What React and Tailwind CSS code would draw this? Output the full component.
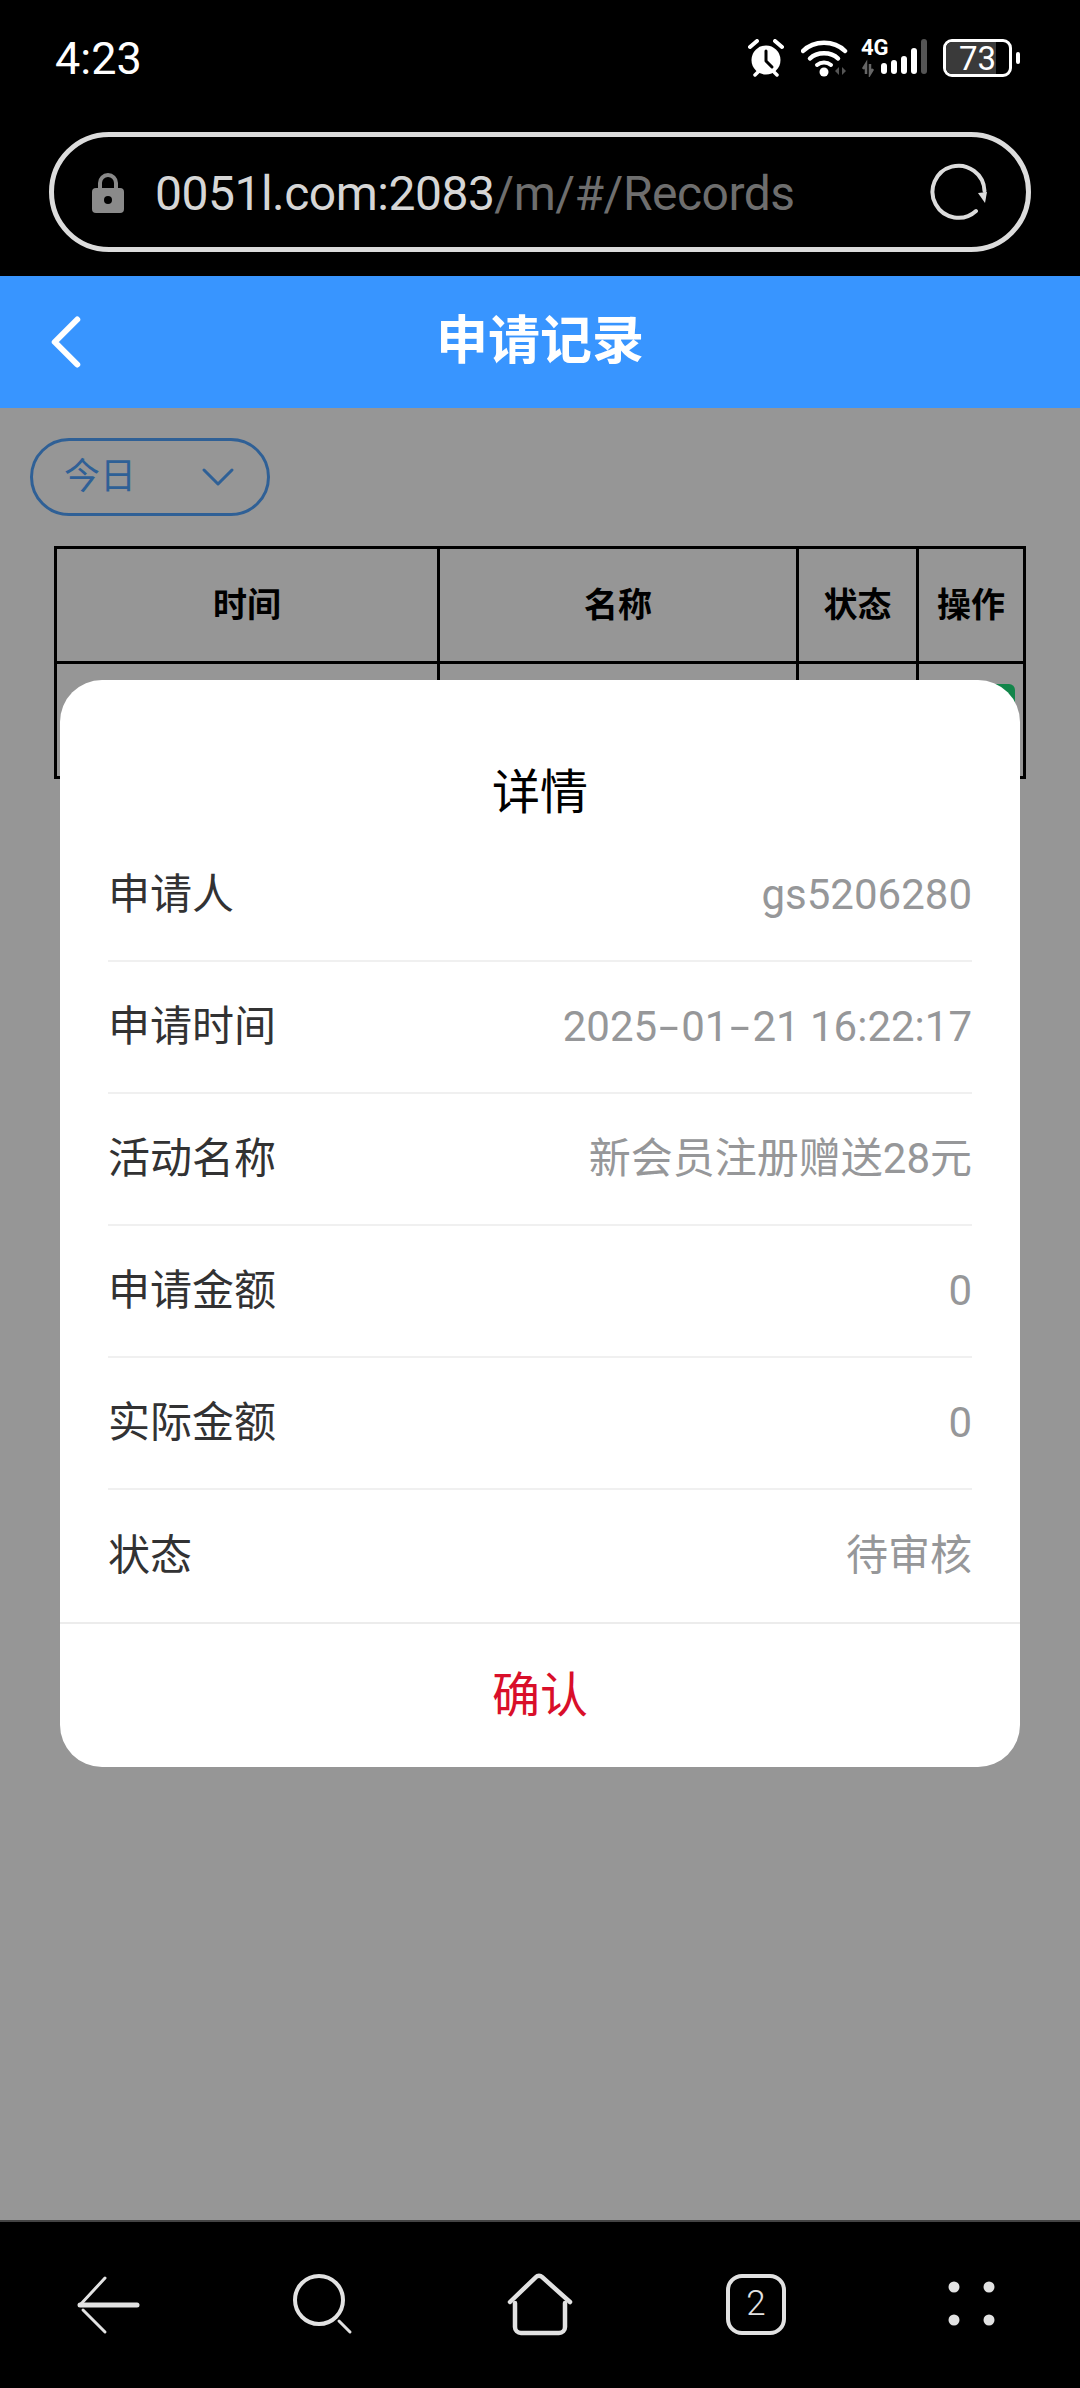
import { ChevronDown, ChevronLeft } from 'lucide-react'

const cjk = "font-['Roboto','Noto_Sans_CJK_SC',sans-serif]"

// the reference font draws hyphens about twice as wide as Roboto does
const WideHyphen = () => <span className="inline-block w-[24px] text-center scale-x-[1.7]">-</span>

const details = [
  { label: '申请人', value: 'gs5206280' },
  { label: '申请时间', value: <>2025<WideHyphen />01<WideHyphen />21 16:22:17</> },
  { label: '活动名称', value: '新会员注册赠送28元' },
  { label: '申请金额', value: '0' },
  { label: '实际金额', value: '0' },
  { label: '状态', value: '待审核' }
]

function StatusIcons() {
  return (
    <div className="flex items-center">
      <svg width="36" height="38" viewBox="0 0 36 38" fill="none" className="mr-[17px]">
        <circle cx="18" cy="21" r="14.5" fill="#fff" />
        <path d="M18 12v10l6 6" stroke="#000" strokeWidth="3" strokeLinecap="round" strokeLinejoin="round" />
        <path d="M2 8l7-6M34 8l-7-6" stroke="#fff" strokeWidth="4" strokeLinecap="round" />
        <path d="M7 36l4-4M29 36l-4-4" stroke="#fff" strokeWidth="3.5" strokeLinecap="round" />
      </svg>
      <svg width="48" height="38" viewBox="0 0 48 38" fill="none" className="mr-[12px]">
        <path d="M2 12C13 1 33 1 44 12" stroke="#fff" strokeWidth="4.5" strokeLinecap="round" />
        <path d="M9 19.5c7-7 21-7 28 0" stroke="#fff" strokeWidth="4.5" strokeLinecap="round" />
        <path d="M16 26c4-3.500 10-3.500 14 0" stroke="#fff" strokeWidth="4" strokeLinecap="round" />
        <circle cx="23" cy="33" r="4.500" fill="#fff" />
        <path d="M38 28v8l-4-4zM41 28v8l4-4z" fill="#555" />
      </svg>
      <div className="relative w-[68px] h-[38px] mr-[14px]">
        <span className="absolute left-0 top-[-2px] font-['Roboto',sans-serif] font-bold text-[22px] leading-[22px] text-white">4G</span>
        <svg width="68" height="38" viewBox="0 0 68 38" fill="#fff" className="absolute left-0 top-0">
          <path d="M2 30l3-5v10M12 30l-3 5V25" stroke="#666" strokeWidth="2.500" fill="none" />
          <rect x="20" y="24" width="6" height="11" rx="3" />
          <rect x="30" y="21" width="6" height="14" rx="3" />
          <rect x="40" y="17" width="6" height="18" rx="3" />
          <rect x="50" y="9" width="6" height="26" rx="3" />
          <rect x="60" y="0" width="6" height="35" rx="3" fill="#555" />
        </svg>
      </div>
      <div className="relative w-[69px] h-[38px] rounded-[9px] border-[3px] border-white overflow-hidden">
        <div className="w-[50px] h-full bg-[#3a3a3a]"></div>
        <span className="absolute inset-0 flex items-center justify-center font-['Roboto',sans-serif] text-[33px] leading-none text-white">73</span>
      </div>
      <div className="w-[4px] h-[12px] ml-[4px] rounded-full bg-white"></div>
    </div>
  )
}

function AddressBar() {
  return (
    <div className="h-[120px] mx-[49px] flex items-center rounded-full border-[5px] border-[#dcdcdc] pl-[38px] pr-[37px]">
      <svg width="32" height="40" viewBox="0 0 32 40" fill="none" className="mr-[31px] mt-[1px]">
        <path d="M8 18V10a8 8 0 0 1 16 0v8" stroke="#8a8a8a" strokeWidth="4" />
        <rect x="0" y="15" width="32" height="25" rx="4" fill="#8a8a8a" />
        <circle cx="16" cy="27" r="4" fill="#000" />
      </svg>
      <div className="flex-1 mt-[3px] text-[48px] leading-none font-['Roboto',sans-serif] tracking-[-0.5px] text-[#d6d6d6]">
        0051l.com:2083<span className="text-[#6e6e6e]">/m/#/Records</span>
      </div>
      <svg width="60" height="60" viewBox="0 0 60 60" fill="none">
        <path d="M47 49A26 26 0 1 1 55.500 29" stroke="#dcdcdc" strokeWidth="4" strokeLinecap="round" />
        <path d="M49 31L58 30L56 41Z" fill="#dcdcdc" />
      </svg>
    </div>
  )
}

function DetailModal() {
  return (
    <div className={`absolute left-[60px] top-[680px] w-[960px] h-[1087px] flex flex-col rounded-[42px] bg-white ${cjk}`}>
      <div className="pt-[86px] text-center text-[48px] leading-[54px] text-black">详情</div>
      <div className="mt-[10px] mx-[48px] flex-1">
        {details.map((row, i) => (
          <div
            key={row.label}
            className={`h-[132px] pb-[2px] flex items-center justify-between text-[42px] ${i < details.length - 1 ? 'border-b-2 border-[#f0f0f0]' : ''}`}
          >
            <span className="text-[#323233]">{row.label}</span>
            <span className="text-[#969799]">{row.value}</span>
          </div>
        ))}
      </div>
      <div className="h-[145px] flex items-center justify-center border-t-2 border-[#ececec] text-[48px] text-[#d90f2a]">
        确认
      </div>
    </div>
  )
}

export default function App() {
  return (
    <div className={`relative w-[1080px] h-[2388px] flex flex-col overflow-hidden bg-black ${cjk}`}>
      <div className="h-[116px] flex items-center justify-between pl-[55px] pr-[60px]">
        <span className="text-[45px] leading-none font-['Roboto',sans-serif] text-white">4:23</span>
        <StatusIcons />
      </div>
      <div className="h-[160px] pt-[16px]">
        <AddressBar />
      </div>

      <div className="relative h-[132px] flex items-center justify-center bg-[#3895ff]">
        <ChevronLeft className="absolute left-[21px] top-[21px] text-white" size={90} strokeWidth={1.6} />
        <span className="text-[52px] font-bold text-white">申请记录</span>
      </div>

      <div className="flex-1 bg-[#969696] pt-[30px]">
        <div className="ml-[30px] w-[240px] h-[78px] flex items-center justify-between rounded-full border-[3px] border-[#2f6096] pl-[31px] pr-[21px] text-[#2f6096]">
          <span className="text-[36px]">今日</span>
          <ChevronDown size={56} strokeWidth={1.3} />
        </div>
        <table className="mt-[30px] ml-[54px] w-[969px] table-fixed border-collapse border-[3px] border-black text-black">
          <colgroup>
            <col className="w-[383px]" />
            <col className="w-[359px]" />
            <col className="w-[120px]" />
            <col className="w-[107px]" />
          </colgroup>
          <thead>
            <tr className="h-[115px]">
              {['时间', '名称', '状态', '操作'].map((h) => (
                <th key={h} className="border-[3px] border-black text-[34px] font-bold">{h}</th>
              ))}
            </tr>
          </thead>
          <tbody>
            <tr className="h-[115px]">
              <td className="border-[3px] border-black"></td>
              <td className="border-[3px] border-black"></td>
              <td className="border-[3px] border-black"></td>
              <td className="border-[3px] border-black align-top pt-[20px] pl-[6px]">
                <div className="h-[70px] w-[90px] rounded-[6px] bg-[#12854a]"></div>
              </td>
            </tr>
          </tbody>
        </table>
      </div>

      <div className="h-[168px] border-t-2 border-[#444] flex items-center relative">
        <svg width="1080" height="168" viewBox="0 0 1080 168" fill="none" stroke="#e2e2e2" strokeLinecap="round">
          <path d="M105 57L80 84" strokeWidth="3" />
          <path d="M83 89L105 111" strokeWidth="3" />
          <path d="M80 84H137" strokeWidth="5" />
          <circle cx="319" cy="79" r="24" strokeWidth="4" />
          <path d="M339 100l11 11" strokeWidth="3" />
          <path d="M510 81L536 56a4 4 0 0 1 6 0L570 81" strokeWidth="4.500" />
          <path d="M515 82v24a6 6 0 0 0 6 6h38a6 6 0 0 0 6-6V82" strokeWidth="4.500" />
          <rect x="728" y="55" width="56" height="57" rx="14" strokeWidth="4" />
          <g fill="#e2e2e2" stroke="none">
            <circle cx="954" cy="66" r="5.500" />
            <circle cx="989" cy="66" r="5.500" />
            <circle cx="954" cy="99" r="5.500" />
            <circle cx="989" cy="99" r="5.500" />
          </g>
        </svg>
        <span className="absolute left-[728px] top-[54px] w-[56px] h-[57px] flex items-center justify-center font-['Roboto',sans-serif] font-light text-[35px] text-[#e2e2e2]">2</span>
      </div>

      <DetailModal />
    </div>
  )
}
